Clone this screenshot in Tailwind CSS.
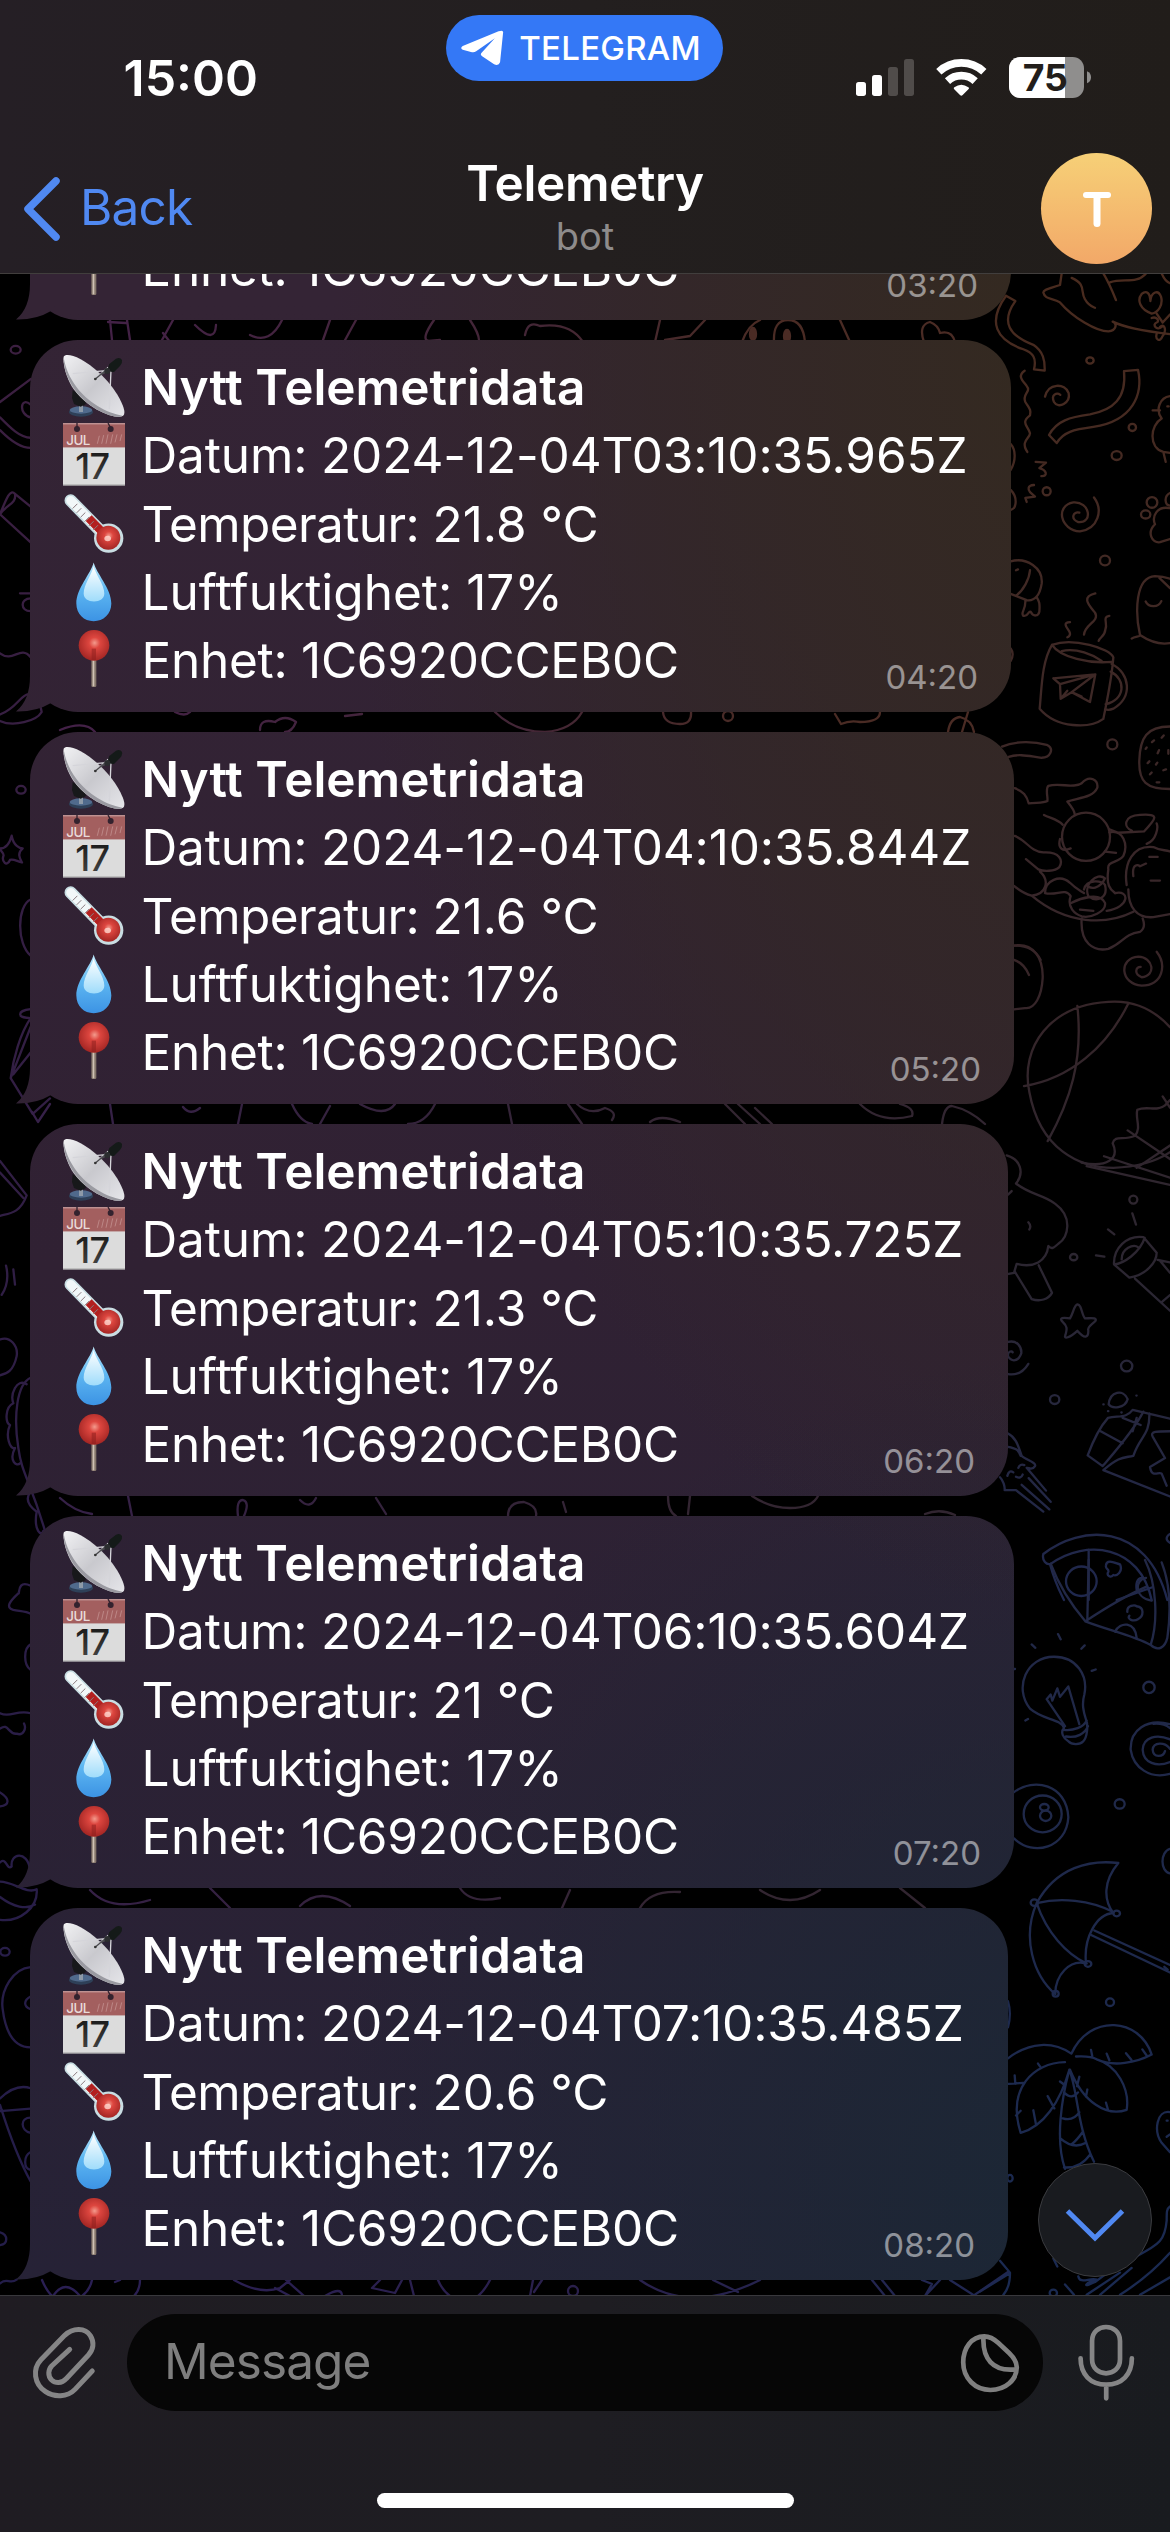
<!DOCTYPE html>
<html lang="sv">
<head>
<meta charset="utf-8">
<title>Telemetry</title>
<script src="https://cdn.jsdelivr.net/npm/@tailwindcss/browser@4"></script>
</head>
<body class="bg-black font-['Inter',sans-serif] text-white">
<svg class="absolute size-0" aria-hidden="true">
  <defs>
    <linearGradient id="dishG" x1="0" y1="0" x2="1" y2="1"><stop offset="0" stop-color="#f2f2f4"/><stop offset=".5" stop-color="#c9c9ce"/><stop offset="1" stop-color="#e6e6ea"/></linearGradient>
    <linearGradient id="dropG" x1="0" y1="0" x2="0" y2="1"><stop offset="0" stop-color="#bfe9fb"/><stop offset=".45" stop-color="#5fb8f2"/><stop offset="1" stop-color="#3c93e4"/></linearGradient>
    <linearGradient id="dropH" x1="0" y1="0" x2="0" y2="1"><stop offset="0" stop-color="#fff"/><stop offset="1" stop-color="#9fdcfb"/></linearGradient>
    <radialGradient id="redG" cx=".52" cy=".42" r=".6"><stop offset="0" stop-color="#f39a8c"/><stop offset=".3" stop-color="#dd463f"/><stop offset="1" stop-color="#a02422"/></radialGradient>
    <linearGradient id="numG" x1="0" y1="0" x2="0" y2="1"><stop offset="0" stop-color="#111"/><stop offset="1" stop-color="#4a4a4a"/></linearGradient>
    <symbol id="dish" viewBox="69 39 186 204.75">
      <ellipse cx="123" cy="216" rx="36" ry="14" fill="#2e4058"/><ellipse cx="123" cy="210" rx="34" ry="11" fill="#506a8c"/>
      <rect x="117" y="190" width="12" height="26" fill="#8e9aa8"/>
      <path d="M98 150l14 8 8 14 12 4 6 16-16 8-20-8-6-18z" fill="#17181a"/>
      <path d="M71 50C75 42 96 44 122 58C170 84 226 140 248 196C258 222 254 232 232 230C190 226 128 190 96 140C76 108 68 66 71 50Z" fill="url(#dishG)"/>
      <path d="M71 52C70 80 80 112 98 140C130 190 190 226 232 230C238 230 244 229 247 227C200 220 142 186 110 142C88 112 76 84 71 52Z" fill="#9a9aa1"/>
      <path d="M98 101L198 92M166 117L205 82M213 90L208 208" stroke="#d5d5da" stroke-width="4" fill="none"/>
      <path d="M166 117l36-30M178 106l28-14" stroke="#4a4a4e" stroke-width="4"/>
      <path d="M208 72L228 56Q240 50 246 60Q248 70 240 78L222 96Q206 98 204 84Z" fill="#141a18"/>
      <circle cx="202" cy="93" r="9" fill="#2b2d2f"/><circle cx="166" cy="117" r="4" fill="#333"/>
    </symbol>
    <symbol id="calendar" viewBox="69 243.75 186 204.75">
      <rect x="69" y="251" width="186" height="186" fill="#dcdcdc"/><rect x="69" y="251" width="186" height="72" fill="#a35f5f"/>
      <rect x="69" y="250" width="186" height="4" fill="#c29494"/><rect x="69" y="434" width="186" height="3" fill="#aaa"/>
      <circle cx="111" cy="268" r="9" fill="#33222e"/><circle cx="212" cy="268" r="9" fill="#33222e"/><path d="M111 264V250M212 264L204 250" stroke="#33222e" stroke-width="4"/>
      <text x="79" y="315" font-family="Inter" font-size="40" font-weight="500" textLength="72" fill="#e9dada">JUL</text>
      <path d="M172 312l6-24M185 312l6-26M198 312l6-28M212 312l6-28M225 308l6-24M240 304l5-20" stroke="#bd8786" stroke-width="3"/>
      <text x="106" y="417" font-family="Inter" font-size="108" font-weight="500" textLength="104" fill="url(#numG)">17</text>
    </symbol>
    <symbol id="thermo" viewBox="69 448.5 186 204.75">
      <path d="M92 480L190 580" stroke="#c7dde2" stroke-width="37" stroke-linecap="round"/><circle cx="206" cy="593" r="44" fill="#c9dde2"/>
      <path d="M92 480L190 580" stroke="#f2f8f9" stroke-width="27" stroke-linecap="round"/>
      <path d="M146 533L190 578" stroke="#b3201f" stroke-width="25"/>
      <circle cx="205" cy="592" r="36" fill="url(#redG)"/>
      <path d="M98 504l14-14M110 517l14-14M122 530l14-14M134 543l14-14M147 556l14-14M160 568l14-14" stroke="#8a7c80" stroke-width="3"/>
      <ellipse cx="203" cy="594" rx="10" ry="8" fill="#ffd8cf" opacity=".8"/>
    </symbol>
    <symbol id="drop" viewBox="69 653.25 186 204.75">
      <path d="M161 667C169 700 214 745 214 790C214 822 190 843 161 843C132 843 109 822 109 790C109 745 153 700 161 667Z" fill="url(#dropG)"/>
      <path d="M161 678C166 702 193 732 193 760C193 776 179 784 162 784C145 784 131 776 131 760C131 732 156 702 161 678Z" fill="url(#dropH)"/>
    </symbol>
    <symbol id="pin" viewBox="69 858 186 204.75">
      <rect x="154" y="945" width="15" height="96" rx="4" fill="#85766b"/><rect x="158" y="960" width="5" height="79" fill="#d0c2b4"/>
      <circle cx="162" cy="916" r="46" fill="url(#redG)"/><rect x="155" y="926" width="13" height="34" fill="#8e1f1d" opacity=".55"/>
    </symbol>
    <linearGradient id="r4" gradientUnits="userSpaceOnUse" x1="0" y1="0" x2="0" y2="1568"><stop offset="0" stop-color="#4a2b1e"/><stop offset="1" stop-color="#36262b"/></linearGradient>
    <linearGradient id="r5" gradientUnits="userSpaceOnUse" x1="0" y1="0" x2="0" y2="1568"><stop offset="0" stop-color="#3a2526"/><stop offset=".55" stop-color="#2b2632"/><stop offset="1" stop-color="#1f284f"/></linearGradient>
    <linearGradient id="r6" gradientUnits="userSpaceOnUse" x1="0" y1="0" x2="0" y2="1568"><stop offset="0" stop-color="#222846"/><stop offset="1" stop-color="#1a2a52"/></linearGradient>
    <linearGradient id="lf" gradientUnits="userSpaceOnUse" x1="0" y1="0" x2="0" y2="1568"><stop offset="0" stop-color="#3c1f40"/><stop offset="1" stop-color="#231d4a"/></linearGradient>
    <linearGradient id="gt" gradientUnits="userSpaceOnUse" x1="0" y1="0" x2="1170" y2="0"><stop offset="0" stop-color="#43204a"/><stop offset=".45" stop-color="#432636"/><stop offset=".65" stop-color="#4a2b24"/></linearGradient>
    <linearGradient id="gm" gradientUnits="userSpaceOnUse" x1="0" y1="0" x2="1170" y2="0"><stop offset="0" stop-color="#36204a"/><stop offset=".6" stop-color="#332531"/><stop offset="1" stop-color="#302530"/></linearGradient>
    <linearGradient id="gb" gradientUnits="userSpaceOnUse" x1="0" y1="0" x2="1170" y2="0"><stop offset="0" stop-color="#2a1f55"/><stop offset=".5" stop-color="#2a204c"/><stop offset="1" stop-color="#1b2a54"/></linearGradient>
  </defs>
</svg>

<main class="relative flex h-[2532px] w-[1170px] flex-col overflow-hidden">
  <header class="z-10 h-[274px] shrink-0 border-b border-[#413e3d] bg-linear-to-r from-[#251f25] via-[#231f1f] to-[#211d1a]">
    <div class="grid h-36 grid-cols-[446px_277px_1fr] items-start">
      <time class="pt-[48px] pl-[123.5px] text-[50px] leading-[60px] font-semibold">15:00</time>
      <div class="mt-[15px] flex h-[66px] items-center rounded-full bg-[#3478f6] pl-[13px]">
        <svg class="mt-[-1px] h-[37.3px] w-[46.3px]" viewBox="615 90 62 112" preserveAspectRatio="none"><path fill="#fff" d="M620 141L668 97Q675 91 674 102L670 190Q668 202 662 196L646 172Q643 167 645 162L663 118L638 157Q635 162 631 159L620 152Q616 147 620 141Z"/></svg>
        <span class="ml-[14px] text-[33px] leading-[40px] font-medium tracking-[0.25px]">TELEGRAM</span>
      </div>
      <div class="flex gap-[22px] pt-[57px] pl-[133px]">
        <svg class="h-[42px] w-[58px]" viewBox="48 171 174 126"><g fill="#fff"><rect x="48" y="246" width="30" height="42" rx="8"/><rect x="96" y="225" width="30" height="63" rx="8"/></g><g fill="#504c4a"><rect x="144" y="201" width="30" height="87" rx="8"/><rect x="192" y="177" width="30" height="111" rx="8"/></g></svg>
        <svg class="h-[42px] w-[51px]" viewBox="288 171 153 126"><g fill="none" stroke="#fff" stroke-width="23"><path d="M296.500 215.400A99 99 0 0 1 431.500 215.400"/><path d="M322.500 243.300A61 61 0 0 1 405.500 243.300"/></g><path fill="#fff" d="M360 285L342 267Q340 264 343 262Q364 247 385 262Q389 264 386 267L368 285Q364 290 360 285Z"/></svg>
        <svg class="h-[42px] w-[82px]" viewBox="507 171 246 126"><defs><clipPath id="bat"><rect x="507" y="171" width="225" height="123" rx="34"/></clipPath></defs><g clip-path="url(#bat)"><rect x="507" y="171" width="225" height="123" fill="#8f8e8d"/><rect x="507" y="171" width="168" height="123" fill="#fff"/></g><path d="M741 214Q753 219 753 232Q753 245 741 250Z" fill="#8f8e8d"/><text x="548" y="273" font-family="Inter" font-size="112" font-weight="700" fill="#221e1b">75</text></svg>
      </div>
    </div>
    <div class="grid h-[129px] grid-cols-[360px_1fr_360px] pr-[18px] pl-[20px]">
      <div class="flex items-center">
        <svg class="h-[72px] w-[44px]" viewBox="0 0 44 72" fill="none" stroke="#5089f2" stroke-width="7.500" stroke-linecap="round" stroke-linejoin="round"><path d="M36 8L8 36L36 64"/></svg>
        <span class="-mt-[3px] ml-[16px] text-[49.5px] leading-[60px] tracking-[-0.8px] text-[#5089f2]">Back</span>
      </div>
      <div class="-ml-[2px] flex flex-col items-center pt-[9px]">
        <h1 class="text-[49.5px] leading-[60px] font-semibold tracking-[-0.4px]">Telemetry</h1>
        <p class="text-[38px] leading-[46px] text-[#8e8b8b]">bot</p>
      </div>
      <div class="flex items-center justify-end">
        <div class="flex size-[111px] items-center justify-center rounded-full bg-linear-to-b from-[#f6d077] to-[#f2a868]">
          <svg class="mt-px h-[35px] w-[28px]" viewBox="0 0 28 35" stroke="#fff" stroke-linecap="round"><path d="M3 3H25" stroke-width="6"/><path d="M14 4V31.500" stroke-width="7"/></svg>
        </div>
      </div>
    </div>
  </header>

  <section class="relative flex h-[2021px] shrink-0 flex-col justify-end overflow-hidden">
    <svg class="absolute top-0 left-0 h-[2021px] w-[1170px] [&_*]:[vector-effect:non-scaling-stroke]" viewBox="0 274 1170 2021" fill="none" stroke-width="2.300" stroke-linecap="round" stroke-linejoin="round">
      <g transform="translate(980 260) scale(.33333 .44643)" stroke="url(#r4)">
        <path d="M78 80L106 92C60 140 90 170 160 190C190 205 195 225 194 248L162 245C170 220 160 208 130 200C50 180 20 140 78 80"/>
        <path d="M245 30L240 56C210 64 190 66 190 73C195 90 220 84 240 95C280 130 350 160 385 160C410 158 412 142 398 138C430 150 500 160 570 166M275 40C320 55 300 70 315 88C325 102 335 104 345 107M370 30C390 55 400 75 408 90M390 50C430 40 470 55 498 30M545 30Q555 48 570 52"/>
        <path d="M515 120C480 110 470 90 485 76C500 66 512 76 511 92C514 70 535 66 543 82C550 100 535 118 515 120ZM530 120L548 140L570 122M515 130C530 125 540 138 530 140C515 144 530 160 545 150M540 150C555 140 560 160 548 170C540 185 525 180 530 165"/>
        <ellipse cx="330" cy="225" rx="11" ry="7"/><ellipse cx="457" cy="375" rx="11" ry="8"/><ellipse cx="410" cy="438" rx="15" ry="10"/><ellipse cx="200" cy="518" rx="12" ry="9"/><ellipse cx="375" cy="673" rx="15" ry="11"/><ellipse cx="397" cy="1085" rx="15" ry="11"/>
        <path d="M134 248C110 260 130 272 140 282C155 295 125 300 136 318C145 330 155 335 150 348C120 365 145 372 150 388C150 400 120 405 142 430"/>
        <path d="M195 306C205 275 255 275 266 298C272 320 235 335 222 318C212 302 230 296 241 302"/>
        <path d="M432 249L474 246C490 300 460 360 340 374C280 380 250 385 230 410L207 392C230 360 270 352 330 346C400 336 440 310 432 249Z"/>
        <path d="M570 305C540 308 525 335 545 355C510 370 505 420 550 430L570 432M518 337H540M550 430L557 452M562 328h4"/>
        <path d="M167 452L198 454L178 466C200 470 205 485 184 484M162 504C140 505 145 515 150 520L165 530L136 533L140 542"/>
        <path d="M342 532C370 560 355 602 300 608C240 605 225 550 280 543C330 540 340 590 295 587C270 580 280 562 298 566"/>
        <ellipse cx="516" cy="543" rx="16" ry="12"/><ellipse cx="497" cy="570" rx="14" ry="9"/><path d="M570 522C550 530 555 550 570 550M570 556C530 550 515 575 525 592C500 610 515 635 540 632L570 625"/>
        <path d="M92 412C108 425 108 450 92 470M92 515C112 530 112 555 92 560M92 870Q104 882 92 898"/>
        <path d="M92 675C140 665 190 690 185 725C180 750 165 765 140 762L92 748M150 695C148 715 130 740 108 752M108 695l6-2M136 762C138 785 120 790 130 797C145 800 145 785 152 788C160 800 175 798 178 788C180 770 178 765 170 755"/>
        <path d="M346 747C300 755 330 775 345 790C360 810 315 815 312 839M388 797C365 800 385 815 376 828C375 842 360 845 356 853M270 811C245 812 262 825 268 832C275 842 262 845 262 845"/>
        <path d="M216 862C185 900 185 960 179 1005C230 1050 330 1050 370 1028C380 990 395 940 400 890C390 870 280 845 216 862ZM216 862C240 890 330 905 395 900M245 876C290 868 340 885 365 898M395 905C450 925 460 980 400 1005Q385 1010 375 1006M392 922C440 940 435 985 377 995"/>
        <path d="M220 937L346 928L330 990L275 968L346 928L240 950L242 983L275 968L305 978M242 983L262 965M220 937L240 950"/>
        <path d="M455 848C465 842 480 845 480 840C465 790 465 710 525 708C545 708 560 711 570 714M480 840C510 855 540 862 570 858M497 765C505 778 535 780 544 764M538 712L570 735"/>
        <path d="M570 1045C500 1045 480 1070 478 1120C475 1170 500 1185 570 1185M516 1080l6-4M545 1070l6-5M497 1095l3-3M533 1105l4-7M503 1127l5-4M528 1130l4-4M550 1143l8-2M510 1152l5-4M530 1170h8M565 1098v8"/>
        <path d="M66 1090C110 1075 170 1080 200 1086C225 1095 210 1115 185 1115C150 1112 120 1105 86 1113M104 1183C130 1190 140 1200 146 1217C170 1215 190 1217 202 1212C205 1205 195 1185 205 1178C240 1170 280 1185 305 1172C330 1152 355 1165 352 1182C340 1205 290 1205 262 1213C275 1225 285 1235 284 1242M192 1243C210 1250 235 1253 248 1265M104 1290C140 1300 150 1325 190 1327C240 1325 250 1345 238 1360C225 1370 190 1370 175 1365L138 1342M180 1370C210 1390 200 1420 155 1424C135 1420 115 1410 102 1402M155 1424C260 1490 380 1490 460 1460"/>
        <ellipse cx="318" cy="1292" rx="72" ry="54"/><path d="M240 1297C232 1320 250 1325 272 1318M388 1282C430 1275 445 1310 430 1335C415 1352 380 1345 385 1365C378 1400 390 1410 405 1418M388 1275L415 1283L492 1280C530 1250 540 1240 480 1243C430 1245 430 1270 455 1278M375 1325L408 1328M500 1308C530 1300 535 1270 530 1262M440 1400C430 1350 460 1310 520 1315C545 1325 555 1320 570 1325M445 1410C445 1450 470 1475 520 1472L570 1465M460 1380C455 1350 475 1355 480 1358L498 1352M508 1337h25M512 1390h28"/>
        <path d="M195 1418C195 1390 240 1375 270 1395C290 1410 300 1412 312 1418M195 1418C230 1425 255 1405 272 1425C260 1450 285 1465 305 1470C330 1475 380 1460 375 1440C360 1415 300 1430 275 1440M312 1410C320 1385 370 1390 375 1400C385 1430 350 1440 325 1425C310 1400 350 1370 375 1385C360 1410 330 1410 320 1400M405 1418C450 1410 450 1450 380 1458M300 1455L340 1458M305 1475C300 1530 340 1550 385 1543C430 1530 430 1510 480 1505C500 1495 490 1480 488 1475M102 1536Q160 1535 182 1568"/>
      </g>
      <g transform="translate(980 900) scale(.33333 .44643)" stroke="url(#r5)">
        <path d="M102 102C160 95 190 130 188 175C185 215 165 245 135 242L102 245M102 134C125 140 140 155 147 168M530 116C560 145 550 190 485 192C420 188 415 130 475 127C520 128 530 170 485 173C460 165 468 150 482 150"/>
        <path d="M570 285C510 235 440 225 385 228C210 235 120 330 148 430C180 560 300 600 400 600C470 598 530 585 570 565M292 237C310 360 270 450 203 540M445 232C380 330 270 400 132 417"/>
        <path d="M305 588C380 600 420 580 398 545C405 525 430 540 465 528C485 510 465 490 472 470C500 460 530 475 555 460L570 448M443 516L570 580M372 574L570 622M320 596L570 638M548 440L570 465M470 600L570 550"/>
        <path d="M80 572C120 580 135 610 108 635C150 660 190 660 225 680C280 710 265 755 235 770C220 780 215 783 205 775C200 810 160 825 110 815L102 835L82 838M84 660L95 652M145 722Q155 730 148 738M104 832L155 894C180 900 205 895 216 880L176 818"/>
        <ellipse cx="460" cy="671" rx="12" ry="9"/><ellipse cx="281" cy="800" rx="11" ry="7"/><ellipse cx="440" cy="1044" rx="17" ry="12"/><ellipse cx="224" cy="1119" rx="14" ry="10"/>
        <path d="M457 702L468 727M384 738L403 749M348 796L373 799M402 816C400 780 440 750 490 755L530 790C530 810 500 840 448 846ZM402 816C430 815 480 790 494 757M425 805C425 780 460 770 475 778M533 806L570 812M465 848L570 920M546 900L570 885M540 808L570 835"/>
        <path d="M292 906C305 905 305 930 315 937C335 937 350 935 347 942C340 950 320 955 325 965C325 980 315 985 292 965C270 980 250 985 256 975C262 960 262 955 248 945C235 935 250 935 270 937C280 925 282 908 292 906Z"/>
        <path d="M84 990C110 985 125 1000 124 1015C115 1035 95 1035 84 1022C82 1010 95 1010 98 1013M84 1062C110 1065 130 1058 145 1039"/>
        <path d="M386 1130C390 1100 430 1095 443 1118C435 1140 395 1140 386 1130ZM384 1160C420 1155 440 1160 458 1142L570 1162M384 1160C360 1180 340 1210 323 1244L368 1268C400 1240 460 1190 490 1146M362 1190L428 1217M428 1160L482 1176M508 1150C510 1200 480 1200 460 1245C430 1250 420 1245 370 1277L570 1336M458 1190L470 1160M570 1190C530 1190 510 1190 518 1202L555 1250L510 1270C515 1295 535 1280 545 1285L560 1312M370 1130h1M384 1145h1M424 1148h1M469 1110h1"/>
        <path d="M84 1195C110 1205 115 1225 125 1245C140 1255 170 1260 165 1268C155 1280 145 1270 140 1272L198 1323M146 1295L212 1348M125 1310L208 1365M60 1293C70 1300 75 1315 74 1322L108 1322L190 1370M82 1290q5-15 18-8M115 1272q5-10 18-6M108 1292q15 5 20-5M84 1225C105 1228 115 1230 122 1245"/>
        <path d="M190 1465C300 1400 500 1390 562 1568M190 1465C185 1480 200 1490 212 1487C320 1430 480 1445 515 1568M210 1488C225 1530 240 1550 252 1568M326 1455V1568M410 1568L515 1540M378 1490C380 1475 405 1485 420 1488C430 1505 410 1515 400 1512C390 1520 378 1512 385 1505C388 1498 375 1500 378 1490ZM470 1545C465 1520 485 1515 490 1520M570 1420Q550 1430 570 1440"/><ellipse cx="304" cy="1526" rx="46" ry="33"/>
      </g>
      <g transform="translate(980 1560) scale(.33333 .47194)" stroke="url(#r6)">
        <path d="M212 8C240 60 280 100 316 130C390 150 460 160 512 180C535 130 530 50 495 0M512 180C535 195 555 185 562 165C575 100 570 50 545 5M316 130C380 100 440 75 498 57M326 0L322 128M405 152C420 130 465 130 470 165M498 38C465 40 460 80 515 86M442 110C440 95 465 95 470 98C495 100 490 120 475 125C460 132 440 125 448 118"/>
        <path d="M252 356C240 335 190 340 150 315C100 270 140 205 222 205C290 205 325 245 313 285C305 305 310 320 318 338C325 350 322 375 310 384C300 392 275 392 265 384C250 378 240 365 252 356ZM255 352L200 295L212 285L217 298L232 272L240 290L265 268L298 348M252 360C280 362 310 355 320 340M258 374C290 378 315 368 324 352M155 179L166 186M234 157L242 168M304 188L314 181M335 235L347 232M136 340L144 337M102 231h3"/>
        <ellipse cx="507" cy="270" rx="17" ry="12"/><ellipse cx="419" cy="517" rx="15" ry="10"/><ellipse cx="390" cy="937" rx="12" ry="8"/><ellipse cx="90" cy="1310" rx="8" ry="7"/><ellipse cx="220" cy="1553" rx="11" ry="7"/>
        <path d="M570 348C500 335 450 360 452 402C460 440 510 465 570 453M520 347Q550 345 570 356M570 380C530 368 490 375 488 402C490 430 530 440 570 428M570 400C555 385 520 385 518 402C520 420 550 418 555 405M570 612C540 618 540 660 570 664"/>
        <path d="M102 492C160 460 260 475 265 545C260 610 160 630 102 590"/><ellipse cx="188" cy="538" rx="57" ry="39"/><ellipse cx="193" cy="524" rx="13" ry="7"/><ellipse cx="197" cy="542" rx="17" ry="11"/>
        <path d="M170 727C230 650 330 635 415 642C370 680 370 720 400 748C350 750 310 800 318 855C270 845 225 880 226 920C160 880 125 800 170 727ZM170 727C240 715 330 720 400 746M170 727C200 790 260 835 320 855M343 785L570 858M335 795L570 874M553 862l10 6"/><ellipse cx="163" cy="726" rx="11" ry="7"/><ellipse cx="410" cy="749" rx="10" ry="6"/><ellipse cx="324" cy="856" rx="10" ry="6"/><ellipse cx="227" cy="919" rx="9" ry="6"/>
        <path d="M84 1056C150 1020 220 1020 274 1046C330 960 480 970 515 1048C470 1065 400 1075 350 1058C330 1050 310 1052 288 1052M350 1058C410 1070 450 1120 440 1165C380 1180 310 1150 270 1080M255 1064C160 1065 80 1120 122 1214C190 1200 240 1150 268 1080C245 1140 225 1230 255 1290M268 1080C295 1130 290 1200 342 1275M84 1110L130 1108M106 1110L104 1092M182 1075l-8-8M333 1038l4 14M380 1046l8 14M438 1045l16 14M487 1037l14 14M108 1177l14-10M160 1166l8 30M203 1136l20 26M240 1105l15 8M298 1095l-7 20M322 1122l-4 15M378 1150l6 15M248 1183Q280 1190 298 1170M240 1225Q280 1250 318 1235M308 1212Q290 1230 275 1238M252 1287Q300 1290 330 1260M252 1128Q275 1145 294 1128M84 935Q95 960 84 990M570 1170C530 1165 520 1210 545 1235L570 1255M560 1188h3M570 1217l-10 5"/>
        <path d="M60 1485L90 1510C90 1530 85 1545 70 1557M0 1550L88 1512M220 1480L232 1497M255 1535L282 1557M295 1518C300 1535 330 1520 350 1525C320 1530 300 1545 345 1530C400 1500 430 1490 470 1475C540 1450 555 1440 560 1400C560 1380 560 1375 570 1370M320 1557L420 1510M360 1557L455 1500M420 1557C480 1530 530 1500 570 1468M480 1557L570 1520"/>
      </g>
      <g transform="translate(0 300) scale(.33333 1.27551)" stroke="url(#lf)">
        <path d="M0 80L92 62M0 92C30 100 60 108 92 108M0 102C30 110 60 116 92 116M92 82C60 75 55 90 92 92M0 168C20 160 50 160 45 152C30 148 20 155 0 168L92 190M45 152L92 162M60 230H92M92 234C60 234 60 244 92 244M0 277C40 285 60 270 92 280M0 330C40 335 110 330 125 323C120 315 100 308 85 309C60 310 50 320 0 325"/>
        <ellipse cx="47" cy="39" rx="15" ry="3"/><ellipse cx="63" cy="384" rx="14" ry="3"/><path d="M0 430C20 430 30 425 35 420C40 428 60 430 68 430C50 434 60 438 66 441C50 440 40 438 30 439C20 445 5 440 10 436C15 434 0 432 0 430M92 470C50 475 50 505 92 514M92 556C50 557 50 563 92 563C60 575 40 595 32 610L98 638L150 626M40 607L92 590M32 610L92 570"/>
        <path d="M0 675L80 702C60 716 30 716 0 718M0 684L70 704M5 780Q30 770 18 757M40 760L45 772M0 815C30 812 55 820 50 828C40 840 20 842 0 843M92 845C50 850 40 875 55 900C65 920 90 925 135 965M80 850C50 845 30 858 40 865C15 868 15 880 30 882C15 890 30 902 45 900C25 910 50 915 60 912M90 935C70 942 100 948 110 950C100 965 125 970 130 965"/>
        <path d="M92 1008C50 1003 60 1015 55 1014C30 1020 15 1025 40 1027C60 1028 80 1028 92 1030M92 1054C70 1057 70 1070 92 1074M0 1108C30 1112 50 1105 92 1108M0 1120C25 1115 25 1125 50 1124C70 1126 80 1120 72 1116M0 1170C30 1175 30 1180 0 1181M0 1225C20 1220 20 1232 35 1228C30 1218 80 1215 90 1230M0 1240C40 1240 80 1250 110 1246C115 1260 60 1272 0 1270M0 1252C40 1260 80 1262 105 1258"/>
        <ellipse cx="15" cy="1295" rx="14" ry="3"/><path d="M92 1307C40 1308 0 1325 8 1340C20 1365 60 1370 92 1370M92 1330C70 1333 70 1338 92 1340M0 1410C40 1400 70 1400 92 1402M0 1415C30 1440 60 1460 92 1475M0 1420L92 1418M92 1425C60 1425 60 1435 92 1437M92 1452C70 1455 70 1465 92 1466M0 1515C25 1517 25 1524 0 1525M0 1555C20 1550 30 1556 50 1552"/>
      </g>
      <g stroke="url(#gt)">
        <path d="M110 320L112 340M127 320L130 340M108 322L126 323M173 320L162 340M163 333L170 342M195 325Q215 345 216 325M250 335Q270 345 282 320M330 320L323 340M356 320L344 342M434 320Q420 340 429 341L440 340M470 320Q480 335 479 342M525 335Q528 320 540 326Q570 322 583 342M655 342L660 320M665 340L690 336L705 320M742 342Q748 325 760 320M774 342Q773 320 788 320Q803 320 805 342M840 320L850 342M924 342Q918 325 930 322Q938 325 940 333Q952 330 955 342"/>
        <path d="M175 712Q185 717 190 712M260 730Q260 718 275 722Q285 714 296 722Q292 732 285 732M60 730Q85 720 95 732M345 716L362 714M495 712Q515 732 545 732Q572 730 582 712M663 712Q664 724 680 724Q692 724 691 712M835 714L841 724Q850 720 860 722Q880 722 880 712M948 732Q950 718 960 717Q972 720 974 732M968 712L962 732"/><circle cx="728" cy="716" r="5"/><ellipse cx="753" cy="334" rx="3" ry="6" fill="#4a2b24"/><ellipse cx="787" cy="336" rx="3" ry="6" fill="#4a2b24"/>
      </g>
      <g stroke="url(#gm)">
        <path d="M32 1112L38 1122L50 1104M110 1104L113 1124M183 1107Q190 1116 200 1108M242 1104L238 1124M292 1104Q300 1122 312 1124M330 1106L320 1124M360 1104Q385 1118 395 1104M435 1104Q425 1124 408 1124M508 1104L512 1124M568 1104L582 1124M577 1104Q590 1116 605 1108Q618 1112 612 1120M650 1122Q660 1114 680 1122M725 1104L745 1124M738 1104L760 1124M755 1108L772 1124M860 1104Q880 1124 912 1116Q915 1108 900 1104M942 1124Q944 1106 952 1106Q970 1110 985 1124"/>
        <path d="M60 1498Q75 1512 92 1514M128 1496L132 1516M238 1516Q236 1500 243 1500Q250 1502 244 1516M300 1500Q310 1510 316 1498M376 1498L386 1514M508 1516Q508 1502 524 1502Q538 1506 536 1516M563 1502L566 1512M668 1496Q668 1512 676 1516M690 1496L688 1514M752 1496Q770 1508 790 1508Q812 1508 818 1496M925 1514Q940 1508 955 1515"/>
        <path d="M90 1890Q110 1912 150 1900M210 1888L230 1908M300 1906Q320 1886 350 1906M460 1888Q470 1904 500 1898M570 1890L562 1908M640 1908Q650 1890 680 1892M760 1890Q790 1910 820 1890M900 1888L925 1908"/>
      </g>
      <g stroke="url(#gb)">
        <path d="M42 2280Q46 2290 52 2296M53 2296Q65 2278 80 2296M92 2280Q90 2290 82 2296M140 2280Q140 2290 134 2296M115 2282L120 2280M234 2280Q260 2295 280 2288L290 2280M275 2288L290 2296M286 2280L304 2296M325 2296Q342 2286 342 2296M380 2280L372 2288L395 2293L402 2280M410 2280L414 2296M438 2280Q442 2290 450 2296M490 2280Q485 2290 478 2296M533 2280L530 2296M542 2280L534 2292M640 2280Q690 2315 760 2280M713 2280L738 2292M872 2280L885 2296M882 2280L895 2296M922 2280L932 2284L925 2296M940 2280L925 2296M950 2280L975 2296M973 2296L1008 2272"/><circle cx="573" cy="2291" r="5"/>
      </g>
    </svg>

    <div id="messages" class="relative flex flex-col items-start gap-5 pb-[15px] pl-[30px]"></div>

    <button class="absolute right-[18px] bottom-[18px] flex size-[114px] items-center justify-center rounded-full border-[1.5px] border-[#3a3b3f] bg-[#191b1f]" aria-label="Scroll down">
      <svg class="mt-[10px] h-[36px] w-[60px]" viewBox="0 0 60 36" fill="none" stroke="#5089f2" stroke-width="5"><path d="M2.500 4L30 31L57.500 4"/></svg>
    </button>
  </section>

  <footer class="flex flex-1 flex-col border-t border-[#38383c] bg-linear-to-r from-[#1f1c22] via-[#1e1d22] to-[#191b1f]">
    <div class="mt-[18px] flex h-[97px] items-center pl-[31px]">
      <svg class="h-[76.7px] w-[67px] shrink-0" viewBox="80 670 175 230" preserveAspectRatio="none" fill="none" stroke="#858586" stroke-width="5" stroke-linecap="round"><path vector-effect="non-scaling-stroke" d="M240 811L195 866C175 890 140 890 118 873C88 850 83 805 106 777L168 704C190 680 222 681 235 705C247 727 242 748 230 763L172 834C160 850 143 848 134 838C123 825 125 807 134 796L181 746"/></svg>
      <div class="ml-[29px] flex h-[97px] w-[916px] items-center justify-between rounded-full bg-[#060606] pr-[22px] pl-[37px]">
        <span class="-mt-[4px] text-[49.5px] leading-[60px] tracking-[-0.9px] text-[#7e7e7e]">Message</span>
        <svg class="h-[60px] w-[62px]" viewBox="1015 695 162 180" preserveAspectRatio="none" fill="none" stroke="#7f7f7f" stroke-width="4.700" stroke-linejoin="round"><path vector-effect="non-scaling-stroke" d="M1081 705C1048 705 1026 740 1026 783C1026 832 1058 866 1097 866C1137 866 1166 835 1166 798C1166 782 1158 768 1146 755L1118 725C1106 712 1096 705 1081 705ZM1079 708C1076 770 1102 812 1164 804"/></svg>
      </div>
      <svg class="ml-[33px] h-[78.3px] w-[59.7px] shrink-0" viewBox="1322 670 156 235" preserveAspectRatio="none" fill="none" stroke="#858586" stroke-width="4.700" stroke-linecap="round"><path vector-effect="non-scaling-stroke" d="M1364 724C1364 668 1437 668 1437 724V779C1437 835 1364 835 1364 779ZM1334 776C1334 825 1360 855 1401 855C1442 855 1468 825 1468 776M1401 855V896"/></svg>
    </div>
    <div class="mt-[82px] h-[15px] w-[417px] self-center rounded-full bg-white"></div>
  </footer>
</main>

<script>
const tint = "bg-fixed bg-[radial-gradient(ellipse_850px_1500px_at_1080px_300px,#342a1f_0%,#332825b3_50%,#33282500_88%),radial-gradient(ellipse_900px_1000px_at_1080px_2200px,#1b2735_0%,#1e263400_85%),linear-gradient(#342435_12%,#302133_50%,#262236_90%)]";
const full = "h-full rounded-[48px] pt-[13px]";
const rows = [
  { time: "04:20", date: "2024-12-04T03:10:35.965Z", temp: "21.8", box: "w-[981px]" },
  { time: "05:20", date: "2024-12-04T04:10:35.844Z", temp: "21.6", box: "w-[984px]" },
  { time: "06:20", date: "2024-12-04T05:10:35.725Z", temp: "21.3", box: "w-[978px]" },
  { time: "07:20", date: "2024-12-04T06:10:35.604Z", temp: "21", box: "w-[984px]" },
  { time: "08:20", date: "2024-12-04T07:10:35.485Z", temp: "20.6", box: "w-[978px]" },
];
const line = (icon, text, cls) => `
  <p class="flex h-[68.25px] items-center gap-[16.5px] whitespace-nowrap ${cls}">
    <svg class="h-[68.25px] w-[62px] shrink-0"><use href="#${icon}"/></svg><span>${text}</span>
  </p>`;
const bubble = (outer, inner, time, body) => `
  <article class="relative ${outer}">
    <div class="absolute bottom-0 -left-[14px] h-[60px] w-[54px] ${tint} [clip-path:path('M14_0V24Q14_48_0_59.5Q20_60_35_51L54_20V0Z')]"></div>
    <div class="relative pl-[33px] text-[49.5px] leading-[68.25px] ${inner} ${tint}">
      ${body}
      <time class="absolute right-[33px] bottom-[15px] text-[33px] leading-[40px] text-white/50">${time}</time>
    </div>
  </article>`;
const device = line("pin", "Enhet: 1C6920CCEB0C", "tracking-[-0.27px]");
document.getElementById("messages").innerHTML =
  bubble("h-[110px] w-[981px]", "h-full rounded-b-[48px] pt-[24px]", "03:20", device) +
  rows.map(m => bubble("h-[372px] " + m.box, full, m.time,
    line("dish", "Nytt Telemetridata", "font-semibold") +
    line("calendar", "Datum: " + m.date, "tracking-[-0.14px]") +
    line("thermo", `<span class="tracking-[-0.6px]">Temperatur: </span>${m.temp} °C`, "") +
    line("drop", "Luftfuktighet: 17%", "") + device)).join("");
</script>
</body>
</html>
